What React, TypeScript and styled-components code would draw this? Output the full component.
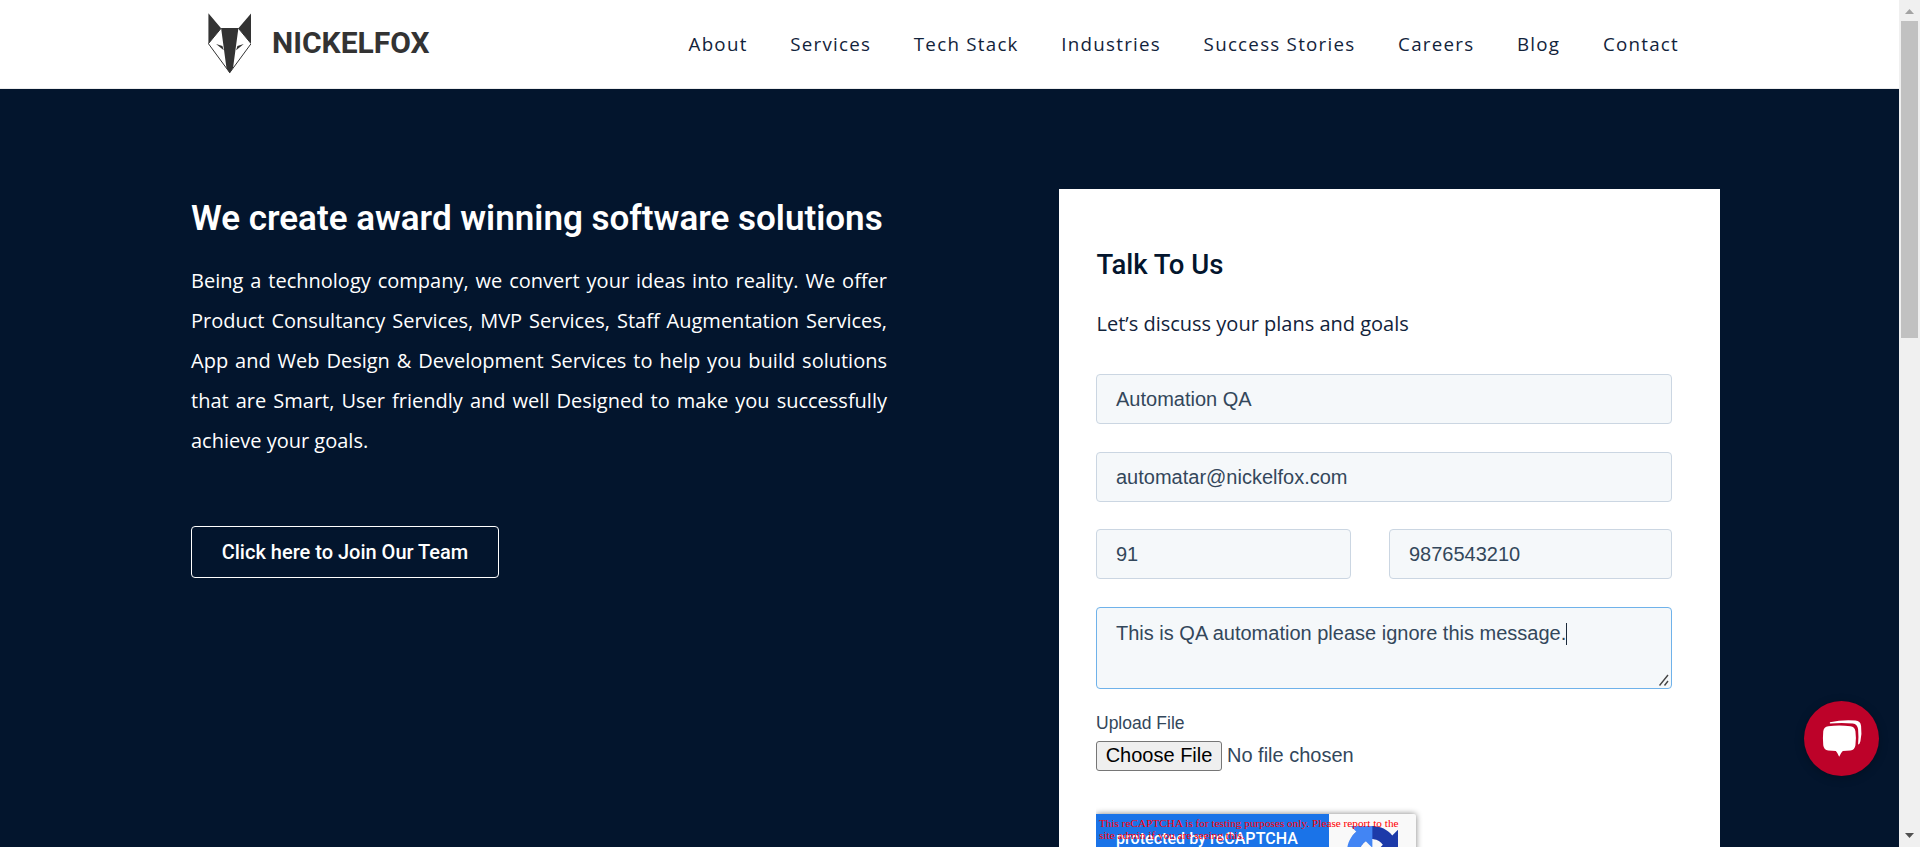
import React from "react";
import styled, { createGlobalStyle } from "styled-components";

const navy = "#03152d";
const sans = "'Liberation Sans', Arial, sans-serif";
const openSans = "'Open Sans', sans-serif";
const roboto = "Roboto, sans-serif";

const GlobalStyle = createGlobalStyle`
  *, *::before, *::after { box-sizing: border-box; }
  body { margin: 0; background: ${navy}; overflow: hidden; }
  h1, h2, p { margin: 0; }
`;

const Viewport = styled.div`
  display: flex;
  width: 1920px;
  height: 847px;
  overflow: hidden;
`;

const Page = styled.div`
  position: relative;
  flex: 1;
  min-width: 0;
  height: 847px;
  overflow: hidden;
  background: ${navy};
`;

const Header = styled.header`
  display: flex;
  align-items: center;
  height: 89px;
  padding: 0 220px 0 207.5px;
  background: #fff;
  border-bottom: 1px solid #ececec;
`;

const Brand = styled.a`
  display: flex;
  align-items: center;
  gap: 21px;
  padding-bottom: 2px;
  color: #333;
`;

const BrandName = styled.span`
  font: 700 30px/40px ${roboto};
  padding-bottom: 1px;
`;

const Nav = styled.nav`
  display: flex;
  gap: 42.6px;
  margin-left: auto;
`;

const NavLink = styled.a`
  font: 400 18.75px/28px ${openSans};
  letter-spacing: 1.25px;
  color: #12233b;
  white-space: nowrap;
`;

const Hero = styled.main`
  display: flex;
  justify-content: space-between;
  align-items: flex-start;
  padding: 100px 179px 0 191px;
`;

const Intro = styled.section`
  width: 696px;
  padding-top: 9px;
  color: #fff;
`;

const Title = styled.h1`
  font: 600 35px/42px ${roboto};
  white-space: nowrap;
`;

const Lead = styled.p`
  margin-top: 21px;
  font: 400 20px/40px ${openSans};
  text-align: justify;
`;

const JoinButton = styled.a`
  display: inline-flex;
  align-items: center;
  justify-content: center;
  width: 308px;
  height: 52px;
  margin-top: 65px;
  border: 1px solid #fff;
  border-radius: 4px;
  font: 500 20px/30px ${roboto};
  color: #fff;
`;

const Card = styled.section`
  width: 661px;
  height: 720px;
  padding: 58px 48px 0 37px;
  background: #fff;
  color: ${navy};
`;

const CardTitle = styled.h2`
  padding-left: 0.5px;
  font: 500 27.5px/36px ${roboto};
`;

const CardText = styled.p`
  margin-top: 26px;
  padding-left: 0.5px;
  font: 400 20px/30px ${openSans};
  color: #12233b;
`;

const Form = styled.div`
  display: flex;
  flex-direction: column;
  margin-top: 35px;
  font-family: ${sans};
  color: #33475b;
`;

const FieldStack = styled.div`
  display: grid;
  grid-template-columns: 255px 283px;
  justify-content: space-between;
  row-gap: 27.7px;
`;

const Field = styled.div<{ $wide?: boolean }>`
  grid-column: ${(p) => (p.$wide ? "1 / -1" : "auto")};
  height: 50px;
  padding: 0 19px;
  background: #f5f8fa;
  border: 1px solid #cbd6e2;
  border-radius: 4px;
  font-size: 20px;
  line-height: 48px;
`;

const Message = styled(Field)`
  position: relative;
  height: 82px;
  padding-top: 12px;
  border-color: #6fb2ea;
  line-height: 27px;
`;

const Caret = styled.span`
  display: inline-block;
  width: 1px;
  height: 22px;
  vertical-align: -5px;
  background: #1b2a3a;
`;

const Grip = styled.svg`
  position: absolute;
  right: 2px;
  bottom: 2px;
`;

const UploadLabel = styled.div`
  margin-top: 22px;
  font-size: 17.5px;
  line-height: 24px;
`;

const FilePicker = styled.div`
  display: flex;
  align-items: center;
  gap: 5px;
  height: 30px;
  margin-top: 6px;
  font-size: 20px;
`;

const ChooseFile = styled.span`
  width: 126px;
  height: 30px;
  background: #efefef;
  border: 1px solid #767676;
  border-radius: 3px;
  color: #000;
  line-height: 27px;
  text-align: center;
`;

const FileStatus = styled.span`
  line-height: 29px;
  padding-bottom: 1px;
`;

const CaptchaFrame = styled.div`
  position: relative;
  width: 332px;
  margin-top: 31px;
  padding-top: 12px;
  overflow: hidden;
`;

const Captcha = styled.div`
  display: flex;
  width: 320px;
  height: 75px;
  background: #f9f9f9;
  border-radius: 2px;
  box-shadow: 0 0 6px #808080;
`;

const CaptchaText = styled.div`
  width: 233px;
  padding: 15px 0 0 20px;
  background: #1a73e8;
  color: #fff;
  font: 500 16px/20px ${roboto};
  letter-spacing: 0.05px;
  white-space: nowrap;
`;

const CaptchaLogo = styled.svg`
  margin: 12px 0 0 18px;
`;

const CaptchaWarning = styled.div`
  position: absolute;
  left: 3px;
  top: 15px;
  width: 308px;
  color: #f00;
  font: 11.25px/12px "Liberation Serif", "Times New Roman", serif;
`;

const ChatButton = styled.button`
  position: absolute;
  right: 20px;
  bottom: 71px;
  width: 75px;
  height: 75px;
  padding: 0;
  border: 0;
  border-radius: 50%;
  background: #bd0229;
  box-shadow: 0 2px 10px rgba(0, 0, 0, 0.25);
`;

const Scrollbar = styled.div`
  display: flex;
  flex-direction: column;
  align-items: center;
  justify-content: space-between;
  width: 21px;
  height: 847px;
  padding: 9px 0;
  background: #f0f0f0;
`;

const ScrollTop = styled.div`
  display: flex;
  flex-direction: column;
  align-items: center;
  gap: 7px;
`;

const Thumb = styled.div`
  width: 17px;
  height: 317px;
  background: #c1c1c1;
`;

const Arrow = styled.svg`
  display: block;
`;

const navItems = [
  "About",
  "Services",
  "Tech Stack",
  "Industries",
  "Success Stories",
  "Careers",
  "Blog",
  "Contact",
];

function FoxLogo() {
  return (
    <svg width="43.5" height="61" viewBox="83 39 130 183" fill="#333">
      <path d="M84 40 122 85 84 131ZM212 40 174 85 212 131ZM122 84H174L158 203 148 220 138 203Z" />
      <path
        d="M84 131 148 218 212 131M84 131 122 85M212 131 174 85"
        fill="none"
        stroke="#333"
        strokeWidth="3"
      />
      <path d="M107 132 126 138 130 151ZM190 132 171 138 167 151Z" />
    </svg>
  );
}

function CaptchaMark() {
  return (
    <CaptchaLogo width="51" height="51" viewBox="0 0 64 64">
      <path
        fill="#1c3aa9"
        d="M64 31.955l-.033-1.37V4.687l-7.16 7.16C50.948 4.674 42.033.093 32.05.093c-10.4 0-19.622 4.96-25.458 12.64l11.736 11.86a15.55 15.55 0 0 1 4.754-5.334c2.05-1.6 4.952-2.906 8.968-2.906.485 0 .86.057 1.135.163 4.976.393 9.288 3.14 11.828 7.124l-8.307 8.307L64 31.953"
      />
      <path
        fill="#4285f4"
        d="M31.862.094l-1.37.033H4.594l7.16 7.16C4.58 13.147 0 22.06 0 32.046c0 10.4 4.96 19.622 12.64 25.458L24.5 45.768a15.55 15.55 0 0 1-5.334-4.754c-1.6-2.05-2.906-4.952-2.906-8.968 0-.485.057-.86.163-1.135.393-4.976 3.14-9.288 7.124-11.828l8.307 8.307L31.86.095"
      />
      <path
        fill="#ababab"
        d="M.001 32.045l.033 1.37v25.898l7.16-7.16c5.86 7.173 14.774 11.754 24.76 11.754 10.4 0 19.622-4.96 25.458-12.64l-11.736-11.86a15.55 15.55 0 0 1-4.754 5.334c-2.05 1.6-4.952 2.906-8.968 2.906-.485 0-.86-.057-1.135-.163-4.976-.393-9.288-3.14-11.828-7.124l8.307-8.307c-10.522.04-22.4.066-27.295-.005"
      />
    </CaptchaLogo>
  );
}

function ChatIcon() {
  return (
    <svg width="75" height="75" viewBox="72 63 226 226" fill="#fff">
      <path d="M145 139Q178 135 212 139 225 141 227 154 230 175 227 196 225 210 212 212L189 214Q184 218 178 231 172 218 168 214L145 212Q132 210 130 196 128 175 130 154 132 141 145 139Z" />
      <path d="M150 127Q187 119 227 122 242 123 244 138 247 163 242 184 240 193 235 194 237 170 235 148 233 133 219 131 186 127 150 131Z" />
    </svg>
  );
}

export default function App() {
  return (
    <Viewport>
      <GlobalStyle />
      <Page>
        <Header>
          <Brand>
            <FoxLogo />
            <BrandName>NICKELFOX</BrandName>
          </Brand>
          <Nav>
            {navItems.map((item) => (
              <NavLink key={item}>{item}</NavLink>
            ))}
          </Nav>
        </Header>
        <Hero>
          <Intro>
            <Title>We create award winning software solutions</Title>
            <Lead>
              Being a technology company, we convert your ideas into reality. We offer Product
              Consultancy Services, MVP Services, Staff Augmentation Services, App and Web Design
              &amp; Development Services to help you build solutions that are Smart, User friendly
              and well Designed to make you successfully achieve your goals.
            </Lead>
            <JoinButton>Click here to Join Our Team</JoinButton>
          </Intro>
          <Card>
            <CardTitle>Talk To Us</CardTitle>
            <CardText>Let’s discuss your plans and goals</CardText>
            <Form>
              <FieldStack>
                <Field $wide>Automation QA</Field>
                <Field $wide>automatar@nickelfox.com</Field>
                <Field>91</Field>
                <Field>9876543210</Field>
                <Message $wide>
                  This is QA automation please ignore this message.
                  <Caret />
                  <Grip width="10" height="12" viewBox="0 0 10 12" stroke="#444" strokeWidth="1.4">
                    <path d="M0.5 11.5 9 1M5.5 11.5 9 7" />
                  </Grip>
                </Message>
              </FieldStack>
              <UploadLabel>Upload File</UploadLabel>
              <FilePicker>
                <ChooseFile>Choose File</ChooseFile>
                <FileStatus>No file chosen</FileStatus>
              </FilePicker>
              <CaptchaFrame>
                <Captcha>
                  <CaptchaText>protected by reCAPTCHA</CaptchaText>
                  <CaptchaMark />
                </Captcha>
                <CaptchaWarning>
                  This reCAPTCHA is for testing purposes only. Please report to the site admin if
                  you are seeing this.
                </CaptchaWarning>
              </CaptchaFrame>
            </Form>
          </Card>
        </Hero>
        <ChatButton aria-label="Chat">
          <ChatIcon />
        </ChatButton>
      </Page>
      <Scrollbar>
        <ScrollTop>
          <Arrow width="9" height="5" viewBox="0 0 9 5" fill="#a3a3a3">
            <path d="M4.5 0 9 5H0Z" />
          </Arrow>
          <Thumb />
        </ScrollTop>
        <Arrow width="9" height="5" viewBox="0 0 9 5" fill="#505050">
          <path d="M0 0H9L4.5 5Z" />
        </Arrow>
      </Scrollbar>
    </Viewport>
  );
}
